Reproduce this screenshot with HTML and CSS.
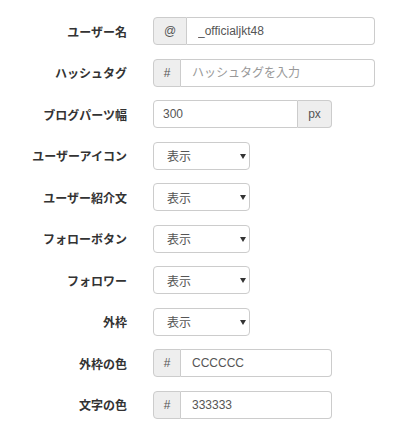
FILE: index.html
```html
<!DOCTYPE html>
<html lang="ja">
<head>
<meta charset="utf-8">
<link rel="stylesheet" href="styles.css">
</head>
<body>
<form class="form">
  <div class="row">
    <label class="lbl">ユーザー名</label>
    <div class="group w-wide">
      <span class="addon a-at">@</span>
      <input class="ctl" type="text" value="_officialjkt48">
    </div>
  </div>
  <div class="row">
    <label class="lbl">ハッシュタグ</label>
    <div class="group w-wide">
      <span class="addon a-hash">#</span>
      <input class="ctl" type="text" placeholder="ハッシュタグを入力">
    </div>
  </div>
  <div class="row">
    <label class="lbl">ブログパーツ幅</label>
    <div class="group w-mid">
      <input class="ctl first" type="text" value="300">
      <span class="addon a-px last">px</span>
    </div>
  </div>
  <div class="row">
    <label class="lbl">ユーザーアイコン</label>
    <div class="sel"><select class="ctl-sel"><option>表示</option></select><svg class="arrow" width="6" height="5" viewBox="0 0 6 5"><path d="M0 0H6L3 5Z" fill="#333"/></svg></div>
  </div>
  <div class="row">
    <label class="lbl">ユーザー紹介文</label>
    <div class="sel"><select class="ctl-sel"><option>表示</option></select><svg class="arrow" width="6" height="5" viewBox="0 0 6 5"><path d="M0 0H6L3 5Z" fill="#333"/></svg></div>
  </div>
  <div class="row">
    <label class="lbl">フォローボタン</label>
    <div class="sel"><select class="ctl-sel"><option>表示</option></select><svg class="arrow" width="6" height="5" viewBox="0 0 6 5"><path d="M0 0H6L3 5Z" fill="#333"/></svg></div>
  </div>
  <div class="row">
    <label class="lbl">フォロワー</label>
    <div class="sel"><select class="ctl-sel"><option>表示</option></select><svg class="arrow" width="6" height="5" viewBox="0 0 6 5"><path d="M0 0H6L3 5Z" fill="#333"/></svg></div>
  </div>
  <div class="row">
    <label class="lbl">外枠</label>
    <div class="sel"><select class="ctl-sel"><option>表示</option></select><svg class="arrow" width="6" height="5" viewBox="0 0 6 5"><path d="M0 0H6L3 5Z" fill="#333"/></svg></div>
  </div>
  <div class="row">
    <label class="lbl">外枠の色</label>
    <div class="group w-mid">
      <span class="addon a-hash">#</span>
      <input class="ctl" type="text" value="CCCCCC">
    </div>
  </div>
  <div class="row">
    <label class="lbl">文字の色</label>
    <div class="group w-mid">
      <span class="addon a-hash">#</span>
      <input class="ctl" type="text" value="333333">
    </div>
  </div>
</form>
</body>
</html>
```
FILE: styles.css
```css
html, body {
  margin: 0;
  padding: 0;
  background: #fff;
}
body {
  font-family: "Liberation Sans", "Noto Sans CJK JP", sans-serif;
  font-size: 12px;
  color: #333;
}
.form {
  display: flex;
  flex-direction: column;
  gap: 13.5px;
  padding-top: 17px;
}
.row {
  display: grid;
  grid-template-columns: 127px auto;
  column-gap: 26px;
  align-items: center;
  justify-items: start;
  height: 28px;
}
.lbl {
  justify-self: end;
  font-family: "Noto Sans CJK JP", sans-serif;
  font-weight: bold;
  font-size: 12px;
  color: #333;
  white-space: nowrap;
}
.group {
  display: flex;
  height: 28px;
  box-sizing: border-box;
}
.w-wide { width: 222px; }
.w-mid { width: 179px; }
.addon {
  flex: none;
  display: flex;
  align-items: center;
  justify-content: center;
  box-sizing: border-box;
  height: 28px;
  background: #eee;
  border: 1px solid #ccc;
  border-radius: 4px 0 0 4px;
  color: #555;
  font-family: "Liberation Sans", sans-serif;
  font-size: 12px;
}
.a-at { width: 34px; }
.a-hash { width: 28px; }
.a-px { width: 34px; }
.addon.last {
  border-radius: 0 4px 4px 0;
  border-left: none;
}
.ctl {
  flex: 1;
  min-width: 0;
  box-sizing: border-box;
  height: 28px;
  margin: 0;
  padding: 0 10px 0 11px;
  border: 1px solid #ccc;
  border-left: none;
  border-radius: 0 4px 4px 0;
  font-family: "Liberation Sans", "Noto Sans CJK JP", sans-serif;
  font-size: 12px;
  color: #555;
  background: #fff;
  outline: none;
}
.ctl.first {
  border-left: 1px solid #ccc;
  border-radius: 4px 0 0 4px;
  padding-left: 9px;
}
.ctl::placeholder {
  color: #999;
  font-family: "Noto Sans CJK JP", sans-serif;
}
.sel {
  position: relative;
  width: 97px;
  height: 28px;
}
.ctl-sel {
  appearance: none;
  -webkit-appearance: none;
  width: 97px;
  height: 28px;
  box-sizing: border-box;
  margin: 0;
  padding: 0 20px 0 13px;
  border: 1px solid #ccc;
  border-radius: 4px;
  background: #fff;
  color: #555;
  font-family: "Noto Sans CJK JP", sans-serif;
  font-size: 12px;
  outline: none;
}
.arrow {
  position: absolute;
  left: 87px;
  top: 12px;
  pointer-events: none;
}
```
